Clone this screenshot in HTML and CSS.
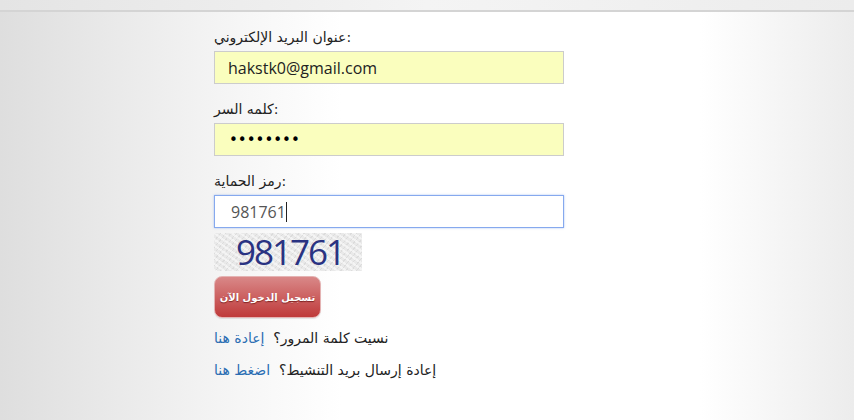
FILE: index.html
```html
<!DOCTYPE html>
<html lang="ar">
<head>
  <meta charset="UTF-8" />
  <title>تسجيل الدخول</title>
  <link rel="stylesheet" href="styles.css">
</head>
<body>
  <div class="topbar"></div>

  <!-- LOGIN FORM -->
  <form class="login" id="loginForm">
    <label for="email">عنوان البريد الإلكتروني:</label>
    <input type="text" id="email" class="filled" value="hakstk0@gmail.com" />

    <label for="pass">كلمه السر:</label>
    <input type="password" id="pass" class="filled pass" value="12345678" />

    <label for="code">رمز الحماية:</label>
    <div class="code-wrap">
      <input type="text" id="code" class="focused" value="981761" />
      <span class="caret"></span>
    </div>

    <div class="captcha">981761</div>

    <button type="submit">تسجيل الدخول الآن</button>

    <p class="help">نسيت كلمة المرور؟ &nbsp;<a href="#">إعادة هنا</a></p>
    <p class="help">إعادة إرسال بريد التنشيط؟ &nbsp;<a href="#">اضغط هنا</a></p>
  </form>
</body>
</html>
```

FILE: styles.css
```css
html, body {
  height: 100%;
}

body {
  margin: 0;
  font-family: "DejaVu Sans", "Noto Sans", sans-serif;
  color: #222;
  background: linear-gradient(to right, #dedede 0%, #f6f6f6 28%, #fff 40%, #fff 82%, #ececec 100%);
}

.topbar {
  height: 10px;
  border-bottom: 2px solid #d4d4d4;
  background: linear-gradient(to right, #e4e4e4, #f4f4f4 50%, #ececec);
}

.login {
  width: 350px;
  margin-left: 214px;
  padding-top: 15px;
}

label {
  display: block;
  font-size: 14px;
  line-height: 20px;
  margin-bottom: 4px;
  white-space: nowrap;
}

input {
  display: block;
  width: 350px;
  height: 33px;
  box-sizing: border-box;
  margin: 0 0 15px;
  padding: 0 13px;
  font-family: "Open Sans", sans-serif;
  font-size: 16px;
  color: #222;
  background: #fff;
  border: 1px solid #ccc;
  outline: none;
}

input.filled {
  background: #fafebe;
}

input.pass {
  font-family: "DejaVu Sans", sans-serif;
  font-size: 15px;
  color: #000;
  padding-left: 14px;
}

.code-wrap {
  position: relative;
}

input.focused {
  margin-bottom: 5px;
  padding-left: 16px;
  color: #555;
  border-color: #86a9ee;
  box-shadow: 0 0 2px rgba(90, 140, 230, 0.5);
}

.caret {
  position: absolute;
  left: 72px;
  top: 7px;
  width: 1px;
  height: 20px;
  background: #222;
}

.captcha {
  width: 148px;
  height: 38px;
  box-sizing: border-box;
  padding-left: 22px;
  font-family: "Open Sans", sans-serif;
  font-size: 35px;
  line-height: 38px;
  letter-spacing: -2px;
  color: #2a3382;
  background-color: #e9e9e9;
  background-image:
    repeating-linear-gradient(35deg, rgba(255,255,255,0.5) 0 2px, transparent 2px 5px),
    repeating-linear-gradient(-50deg, rgba(200,200,200,0.4) 0 1px, transparent 1px 4px);
}

button {
  display: block;
  width: 107px;
  height: 42px;
  margin-top: 5px;
  padding: 0;
  font-family: "DejaVu Sans", sans-serif;
  font-size: 10px;
  font-weight: bold;
  white-space: nowrap;
  color: #fff;
  text-shadow: 0 1px 1px rgba(80, 0, 0, 0.6);
  background: linear-gradient(to bottom, #d98888, #bf3a3a);
  border: 1px solid #e4b3b3;
  border-radius: 8px;
  box-shadow: 0 1px 1px rgba(0,0,0,0.1);
  cursor: pointer;
}

.help {
  margin: 10px 0 0;
  font-size: 14px;
  line-height: 20px;
  white-space: nowrap;
}

.help + .help {
  margin-top: 12px;
}

.help a {
  color: #2a6db3;
  text-decoration: none;
}
```
